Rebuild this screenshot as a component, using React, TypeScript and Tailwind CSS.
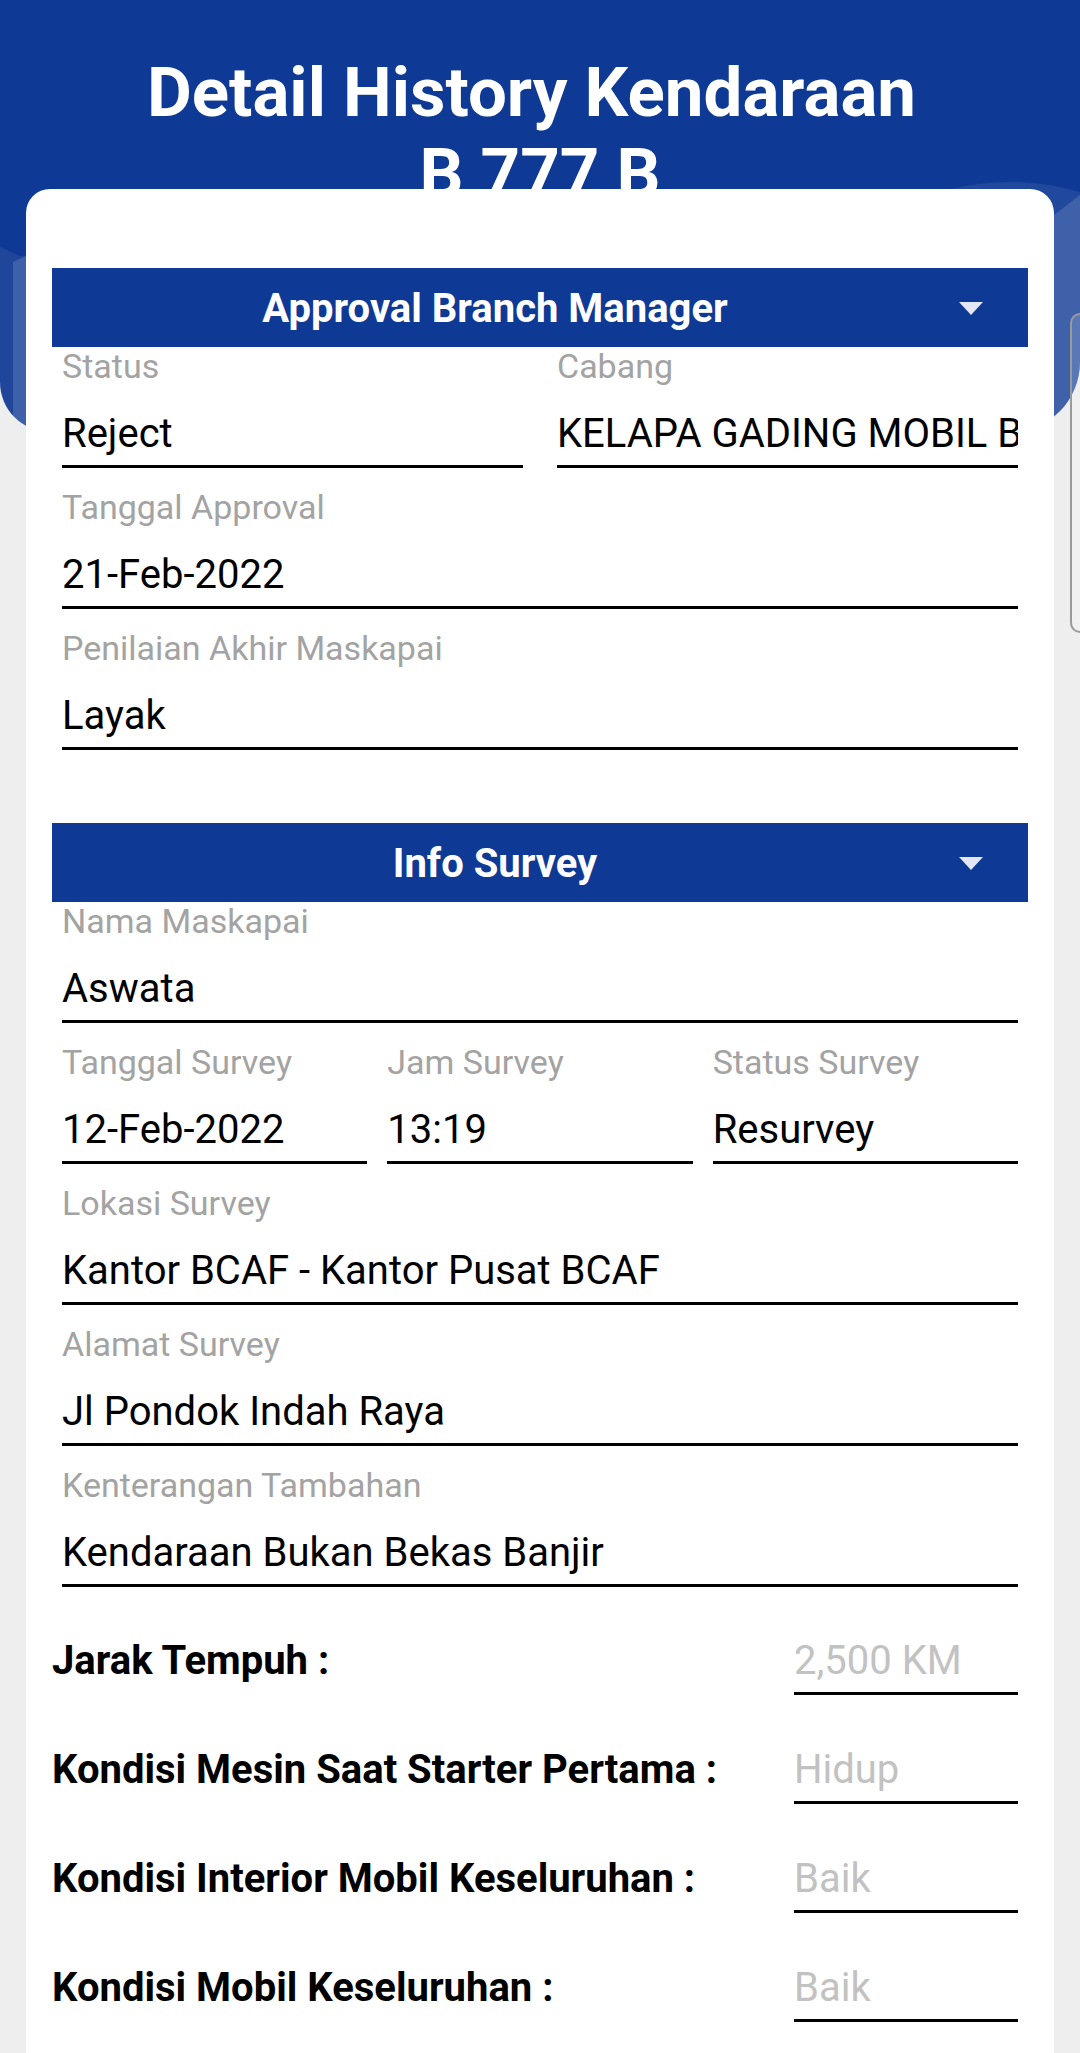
import React from 'react';

interface FieldProps {
  label: string;
  value: string;
}

function Field({ label, value }: FieldProps) {
  return (
    <div className="min-w-0">
      <p className="text-[34px] leading-[39px] text-[#a3a3a3]">{label}</p>
      <p className="mt-[25px] overflow-hidden whitespace-nowrap border-b-[3px] border-black pb-[8px] text-[40px] leading-[46px] text-black">
        {value}
      </p>
    </div>
  );
}

function SectionBar({ title }: { title: string }) {
  return (
    <div className="flex h-[79px] items-center bg-[#0e3994] pt-[2px]">
      <span className="flex-1 text-center text-[40px] font-bold text-white">{title}</span>
      <svg className="ml-[21px] mr-[45px] h-[13px] w-[24px]" viewBox="0 0 24 13">
        <path d="M0 0 H24 L12 13 Z" fill="#e3e6f4" />
      </svg>
    </div>
  );
}

interface CheckRowProps {
  label: string;
  value: string;
}

function CheckRow({ label, value }: CheckRowProps) {
  return (
    <div className="flex items-start justify-between pr-[10px]">
      <p className="text-[40px] font-bold leading-[46px] text-black">{label}</p>
      <p className="w-[224px] border-b-[3px] border-black pb-[8px] text-[40px] leading-[46px] text-[#c2c2c2]">
        {value}
      </p>
    </div>
  );
}

export default function App() {
  return (
    <div className="relative h-[2053px] w-full overflow-hidden bg-[#eeeeee] font-['Roboto',sans-serif]">
      {/* Header */}
      <header className="relative h-[432px] overflow-hidden rounded-bl-[50px] rounded-br-[70px] bg-[#0e3994] pt-[52px]">
        <svg className="absolute inset-0 h-full w-full" viewBox="0 0 1080 432" preserveAspectRatio="none">
          <polygon points="0,247 20,256 26,256 26,432 0,432" fill="#ffffff" fillOpacity="0.07" />
          <polygon points="13,262 26,256 26,432 13,432" fill="#ffffff" fillOpacity="0.14" />
          <ellipse cx="1010" cy="340" rx="200" ry="158" fill="#ffffff" fillOpacity="0.08" />
          <polygon points="1054,215 1080,195 1080,432 1054,432" fill="#ffffff" fillOpacity="0.14" />
        </svg>
        <h1 className="relative text-center text-[69px] font-bold leading-[81px] text-white">
          <span className="block pr-[17px]">Detail History Kendaraan</span>
          <span className="block">B 777 B</span>
        </h1>
      </header>

      {/* Side handle */}
      <div className="absolute left-[1070px] top-[313px] z-20 h-[320px] w-[24px] rounded-[10px] border-2 border-[#9a9a9a] bg-white/15" />

      {/* Card */}
      <main className="relative z-10 mx-[26px] -mt-[243px] rounded-t-[24px] bg-white px-[26px] pb-[80px] pt-[79px]">
        <SectionBar title="Approval Branch Manager" />
        <div className="flex flex-col gap-[20px] px-[10px]">
          <div className="grid grid-cols-2 gap-[34px]">
            <Field label="Status" value="Reject" />
            <Field label="Cabang" value="KELAPA GADING MOBIL B" />
          </div>
          <Field label="Tanggal Approval" value="21-Feb-2022" />
          <Field label="Penilaian Akhir Maskapai" value="Layak" />
        </div>

        <div className="mt-[73px]">
          <SectionBar title="Info Survey" />
        </div>
        <div className="flex flex-col gap-[20px] px-[10px]">
          <Field label="Nama Maskapai" value="Aswata" />
          <div className="grid grid-cols-3 gap-[20px]">
            <Field label="Tanggal Survey" value="12-Feb-2022" />
            <Field label="Jam Survey" value="13:19" />
            <Field label="Status Survey" value="Resurvey" />
          </div>
          <Field label="Lokasi Survey" value="Kantor BCAF - Kantor Pusat BCAF" />
          <Field label="Alamat Survey" value="Jl Pondok Indah Raya" />
          <Field label="Kenterangan Tambahan" value="Kendaraan Bukan Bekas Banjir" />
        </div>

        <div className="mt-[51px] flex flex-col gap-[52px]">
          <CheckRow label="Jarak Tempuh :" value="2,500 KM" />
          <CheckRow label="Kondisi Mesin Saat Starter Pertama :" value="Hidup" />
          <CheckRow label="Kondisi Interior Mobil Keseluruhan :" value="Baik" />
          <CheckRow label="Kondisi Mobil Keseluruhan :" value="Baik" />
        </div>
      </main>
    </div>
  );
}
